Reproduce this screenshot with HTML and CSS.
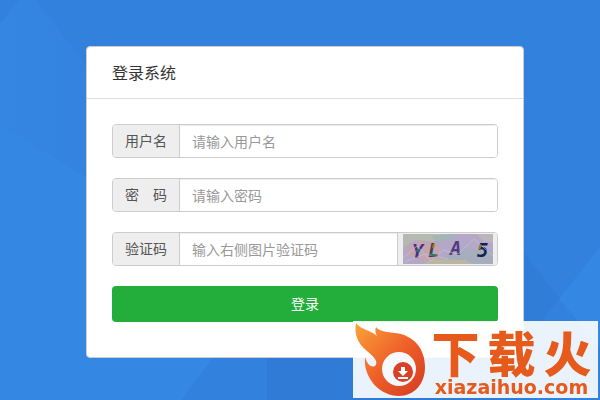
FILE: index.html
```html
<!DOCTYPE html>
<html lang="zh-CN">
<head>
  <meta charset="UTF-8">
  <meta name="viewport" content="width=device-width, initial-scale=1.0">
  <title>登录系统</title>
  <link rel="stylesheet" href="styles.css">
</head>
<body>
  <svg class="bg" viewBox="0 0 600 400" preserveAspectRatio="none" aria-hidden="true">
    <defs>
      <linearGradient id="bgLeft" x1="0" y1="0" x2="1" y2="0">
        <stop offset="0" stop-color="#3585e2"/>
        <stop offset="1" stop-color="#3181dd"/>
      </linearGradient>
    </defs>
    <rect width="600" height="400" fill="#3181dd"/>
    <path d="M0 24L19 0H36L180 190V250L0 124z" fill="url(#bgLeft)"/>
    <path d="M0 124L180 235L267 330V357H214L182 400H0z" fill="#3488e4"/>
    <path d="M214 357H267V400H182z" fill="#3181dd"/>
    <path d="M267 340H540V400H267z" fill="#2f7bd5"/>
    <path d="M500 222L600 350V400H500z" fill="#307dd7"/>
    <path d="M600 247L559 299L600 349z" fill="#3488e4"/>
    <path d="M559 299L530 336V400H600V349z" fill="#3181dd"/>
  </svg>

  <main class="page">
    <form class="login-panel">
      <h1 class="panel-title">登录系统</h1>
      <div class="panel-body">
        <div class="input-group">
          <label class="addon" for="username">用户名</label>
          <input class="field" type="text" id="username" placeholder="请输入用户名">
        </div>
        <div class="input-group">
          <label class="addon" for="password">密　码</label>
          <input class="field" type="password" id="password" placeholder="请输入密码">
        </div>
        <div class="input-group">
          <label class="addon" for="captcha">验证码</label>
          <input class="field" type="text" id="captcha" placeholder="输入右侧图片验证码">
          <span class="captcha-box">
            <svg class="captcha" viewBox="0 0 90 30">
              <rect width="90" height="30" fill="#b3a8c8"/>
              <path d="M0 0H44L30 8L12 6L0 14z" fill="#b4b9b1"/>
              <path d="M4 12L18 6L36 10L38 24L20 27L5 22z" fill="#c2a5ae"/>
              <path d="M28 2L46 0L52 4L34 8z" fill="#a2b6b5"/>
              <path d="M44 20L62 14L90 17V30H40z" fill="#a6adbd"/>
              <path d="M20 30L30 25L62 26L70 30z" fill="#bab6a1"/>
              <path d="M74 0H90V9L80 7z" fill="#bdb5bd"/>
              <g class="captcha-text">
                <text x="9" y="24" fill="#47308c">Y</text>
                <text x="25" y="23" fill="#4b3d52">L</text>
                <text x="47" y="21" fill="#553a80">A</text>
                <text x="74" y="23" fill="#12224e">5</text>
              </g>
              <path d="M0 24L14 12L28 27L40 16L55 20L71 5L90 22M2 28L22 20L45 25" fill="none" stroke="#cfc5da" stroke-width="1" opacity="0.6"/>
              <path d="M13 17L17 16M27 20L33 22" stroke="#267d65" stroke-width="2"/>
              <path d="M31 10L30 14M78 11L76 15" stroke="#a97c24" stroke-width="2"/>
            </svg>
          </span>
        </div>
        <button class="btn-login" type="submit">登录</button>
      </div>
    </form>
  </main>

  <aside class="brand">
    <svg class="brand-logo" viewBox="0 0 72 77" aria-hidden="true">
      <defs>
        <linearGradient id="flame" x1="0" y1="0" x2="1" y2="1">
          <stop offset="0" stop-color="#fba338"/>
          <stop offset="0.5" stop-color="#ef612a"/>
          <stop offset="1" stop-color="#d63a20"/>
        </linearGradient>
      </defs>
      <path d="M3 2C8 9 18 9 24 15C22 12 22 9 23 6C27 11 35 11 42 12C61 14 72 28 72 46C72 63 61 75 46 75C27 75 10 57 12 36C14 43 18 47 22 45C26 41 21 36 14 30C4 22 1 12 3 2z" fill="url(#flame)"/>
      <circle cx="46" cy="48" r="17" fill="#f5f9fe"/>
      <circle cx="50" cy="51" r="10" fill="#d94025"/>
      <path d="M48 46H52V50H55L50 55L45 50H48zM45 56H55V58H45z" fill="#fff"/>
    </svg>
    <div class="brand-name">
      <strong class="brand-cn"><span>下</span><span>载</span><span>火</span></strong>
      <span class="brand-url">xiazaihuo.com</span>
    </div>
  </aside>
</body>
</html>
```
FILE: styles.css
```css
* { margin: 0; padding: 0; box-sizing: border-box; }
body {
  min-height: 100vh;
  font-family: "Noto Sans", "Noto Sans CJK SC", sans-serif;
  font-size: 14px;
  color: #333;
  background: #3181dd;
}
.bg {
  position: fixed;
  top: 0;
  left: 0;
  width: 100%;
  height: 100%;
  z-index: -1;
}
.page {
  padding: 46px 76px 40px 86px;
}
.login-panel {
  background: #fff;
  border: 1px solid #ccc;
  border-radius: 4px;
}
.panel-title {
  padding: 14px 25px 13px;
  font-size: 16px;
  font-weight: 400;
  line-height: 24px;
  border-bottom: 1px solid #ddd;
}
.panel-body {
  display: flex;
  flex-direction: column;
  gap: 20px;
  padding: 25px 25px 35px;
}
.input-group {
  display: flex;
  height: 34px;
  border: 1px solid #ccc;
  border-radius: 4px;
  overflow: hidden;
}
.addon {
  padding: 0 12px;
  line-height: 32px;
  color: #555;
  background: #eee;
  border-right: 1px solid #ccc;
}
.field {
  flex: 1;
  min-width: 0;
  padding: 0 12px;
  font: inherit;
  color: #555;
  background: #fff;
  border: none;
  outline: none;
  box-shadow: inset 0 1px 1px rgba(0, 0, 0, 0.075);
}
.field::placeholder {
  color: #999;
}
.captcha-box {
  display: flex;
  align-items: center;
  padding: 0 4px 0 5px;
  background: #eee;
  border-left: 1px solid #ccc;
}
.captcha {
  width: 90px;
  height: 30px;
}
.captcha-text {
  font-family: "DejaVu Sans Mono", monospace;
  font-size: 19px;
  font-style: italic;
  font-weight: 700;
}
.btn-login {
  height: 36px;
  padding-bottom: 2px;
  font: inherit;
  color: #fff;
  background: #23ad3a;
  border: none;
  border-radius: 4px;
  cursor: pointer;
}
.brand {
  position: fixed;
  right: 2px;
  bottom: 2px;
  display: flex;
  width: 245px;
  height: 77px;
  background: rgba(255, 255, 255, 0.9);
}
.brand-logo {
  flex: none;
  width: 72px;
  height: 77px;
}
.brand-name {
  display: flex;
  flex-direction: column;
  align-items: center;
  flex: 1;
  padding-top: 6px;
  color: #e65a1c;
}
.brand-cn {
  display: flex;
  gap: 8px;
  font-family: "Noto Sans CJK SC", sans-serif;
  font-size: 48px;
  font-weight: 900;
  line-height: 48px;
}
.brand-url {
  font-family: "DejaVu Sans", sans-serif;
  font-size: 19px;
  font-weight: 700;
  line-height: 24px;
}
```
